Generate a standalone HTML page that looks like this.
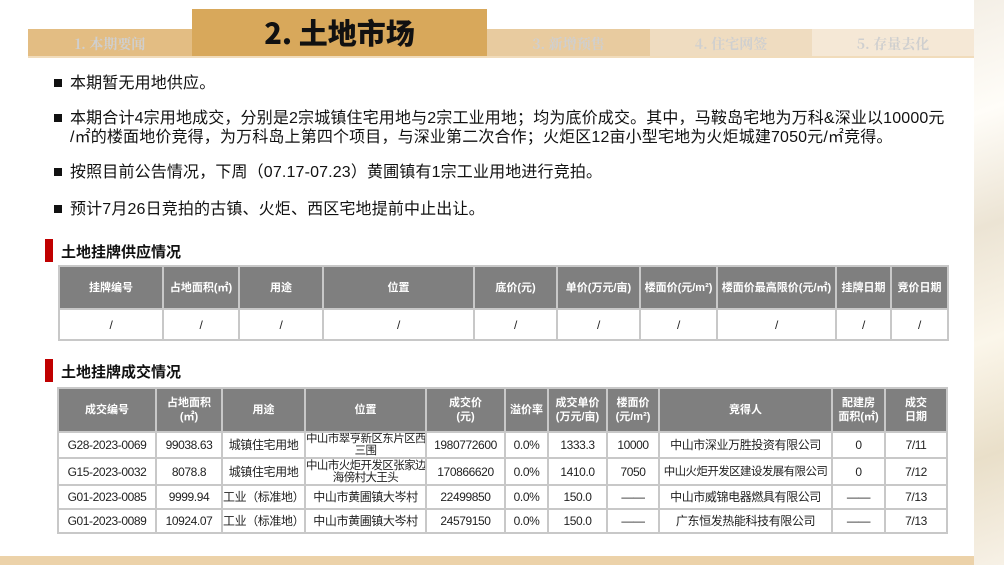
<!DOCTYPE html><html><head><meta charset="utf-8"><style>
body{margin:0;width:1004px;height:565px;overflow:hidden;background:#fff;font-family:"Liberation Sans","Noto Sans CJK SC",sans-serif;position:relative}
.abs{position:absolute}
.tab{position:absolute;top:29px;height:27px;color:#cfcfcf;font:bold 14px "Noto Serif CJK SC",serif;text-align:center;line-height:30px}
.b{position:absolute;left:54px;font-size:16px;color:#111;line-height:19px;letter-spacing:0.15px}
.b:before{content:"";position:absolute;left:0;top:5px;width:8px;height:8px;background:#111}
.b span{display:block;padding-left:16px}
.h{position:absolute;left:45px;height:23px;border-left:8px solid #c00000;padding-left:8px;font:bold 15px "Noto Sans CJK SC",sans-serif;line-height:26px;color:#111}
table{position:absolute;border-collapse:collapse;table-layout:fixed}
td{border:2px solid #c8c8c8;text-align:center;padding:0;font-size:12px;color:#222;overflow:hidden;line-height:12px;white-space:nowrap;letter-spacing:-0.4px}
td.p{font-size:11.5px;letter-spacing:-0.6px}
tr.hd td{background:#7f7f7f;color:#fff;font-weight:bold;font-size:11px;border-color:#c8c8c8;line-height:14px;letter-spacing:0}
</style></head><body>
<div class="abs" style="left:974px;top:0;width:30px;height:565px;background:linear-gradient(160deg,#f4efe6,#fffdf8 20%,#ece4d4 40%,#fbf6ea 60%,#e9dfc9 80%,#f7f1e6)"></div>
<div class="abs" style="left:0;top:556px;width:974px;height:9px;background:#ecd2a9"></div>
<div class="tab" style="left:28px;width:164px;background:#e3bd83">1. 本期要闻</div>
<div class="abs" style="left:192px;top:9px;width:295px;height:47px;background:#d8a85b;text-align:center;font:900 29px 'Noto Sans CJK SC',sans-serif;line-height:46px;color:#111">2. 土地市场</div>
<div class="tab" style="left:487px;width:163px;background:#e8cb9f">3. 新增预售</div>
<div class="tab" style="left:650px;width:162px;background:#efdcc0">4. 住宅网签</div>
<div class="tab" style="left:812px;width:162px;background:#f5e8d6">5. 存量去化</div>
<div class="abs" style="left:28px;top:56px;width:946px;height:2px;background:#f1dcbb"></div>
<div class="b" style="top:74px"><span>本期暂无用地供应。</span></div>
<div class="b" style="top:109px;width:910px"><span>本期合计4宗用地成交，分别是2宗城镇住宅用地与2宗工业用地；均为底价成交。其中，马鞍岛宅地为万科&amp;深业以10000元<br>/㎡的楼面地价竞得，为万科岛上第四个项目，与深业第二次合作；火炬区12亩小型宅地为火炬城建7050元/㎡竞得。</span></div>
<div class="b" style="top:163px"><span>按照目前公告情况，下周（07.17-07.23）黄圃镇有1宗工业用地进行竞拍。</span></div>
<div class="b" style="top:200px"><span>预计7月26日竞拍的古镇、火炬、西区宅地提前中止出让。</span></div>
<div class="h" style="top:239px">土地挂牌供应情况</div>
<table style="left:58px;top:265px;width:891px">
<colgroup><col style="width:104px"><col style="width:76px"><col style="width:84px"><col style="width:151px"><col style="width:83px"><col style="width:83px"><col style="width:77px"><col style="width:119px"><col style="width:55px"><col style="width:57px"></colgroup>
<tr class="hd" style="height:43px"><td>挂牌编号</td><td>占地面积(㎡)</td><td>用途</td><td>位置</td><td>底价(元)</td><td>单价(万元/亩)</td><td>楼面价(元/m²)</td><td>楼面价最高限价(元/㎡)</td><td>挂牌日期</td><td>竞价日期</td></tr>
<tr style="height:31px"><td>/</td><td>/</td><td>/</td><td>/</td><td>/</td><td>/</td><td>/</td><td>/</td><td>/</td><td>/</td></tr></table>
<div class="h" style="top:359px">土地挂牌成交情况</div>
<table style="left:57px;top:387px;width:889px">
<colgroup><col style="width:98px"><col style="width:66px"><col style="width:83px"><col style="width:121px"><col style="width:79px"><col style="width:43px"><col style="width:59px"><col style="width:52px"><col style="width:173px"><col style="width:53px"><col style="width:62px"></colgroup>
<tr class="hd" style="height:44px"><td>成交编号</td><td>占地面积<br>(㎡)</td><td>用途</td><td>位置</td><td>成交价<br>(元)</td><td>溢价率</td><td>成交单价<br>(万元/亩)</td><td>楼面价<br>(元/m²)</td><td>竞得人</td><td>配建房<br>面积(㎡)</td><td>成交<br>日期</td></tr>
<tr style="height:26px"><td>G28-2023-0069</td><td>99038.63</td><td>城镇住宅用地</td><td class="p">中山市翠亨新区东片区西<br>三围</td><td>1980772600</td><td>0.0%</td><td>1333.3</td><td>10000</td><td>中山市深业万胜投资有限公司</td><td>0</td><td>7/11</td></tr>
<tr style="height:27px"><td>G15-2023-0032</td><td>8078.8</td><td>城镇住宅用地</td><td class="p">中山市火炬开发区张家边<br>海傍村大王头</td><td>170866620</td><td>0.0%</td><td>1410.0</td><td>7050</td><td class="p">中山火炬开发区建设发展有限公司</td><td>0</td><td>7/12</td></tr>
<tr style="height:24px"><td>G01-2023-0085</td><td>9999.94</td><td>工业（标准地）</td><td>中山市黄圃镇大岑村</td><td>22499850</td><td>0.0%</td><td>150.0</td><td>——</td><td>中山市威锦电器燃具有限公司</td><td>——</td><td>7/13</td></tr>
<tr style="height:24px"><td>G01-2023-0089</td><td>10924.07</td><td>工业（标准地）</td><td>中山市黄圃镇大岑村</td><td>24579150</td><td>0.0%</td><td>150.0</td><td>——</td><td>广东恒发热能科技有限公司</td><td>——</td><td>7/13</td></tr></table>
</body></html>
